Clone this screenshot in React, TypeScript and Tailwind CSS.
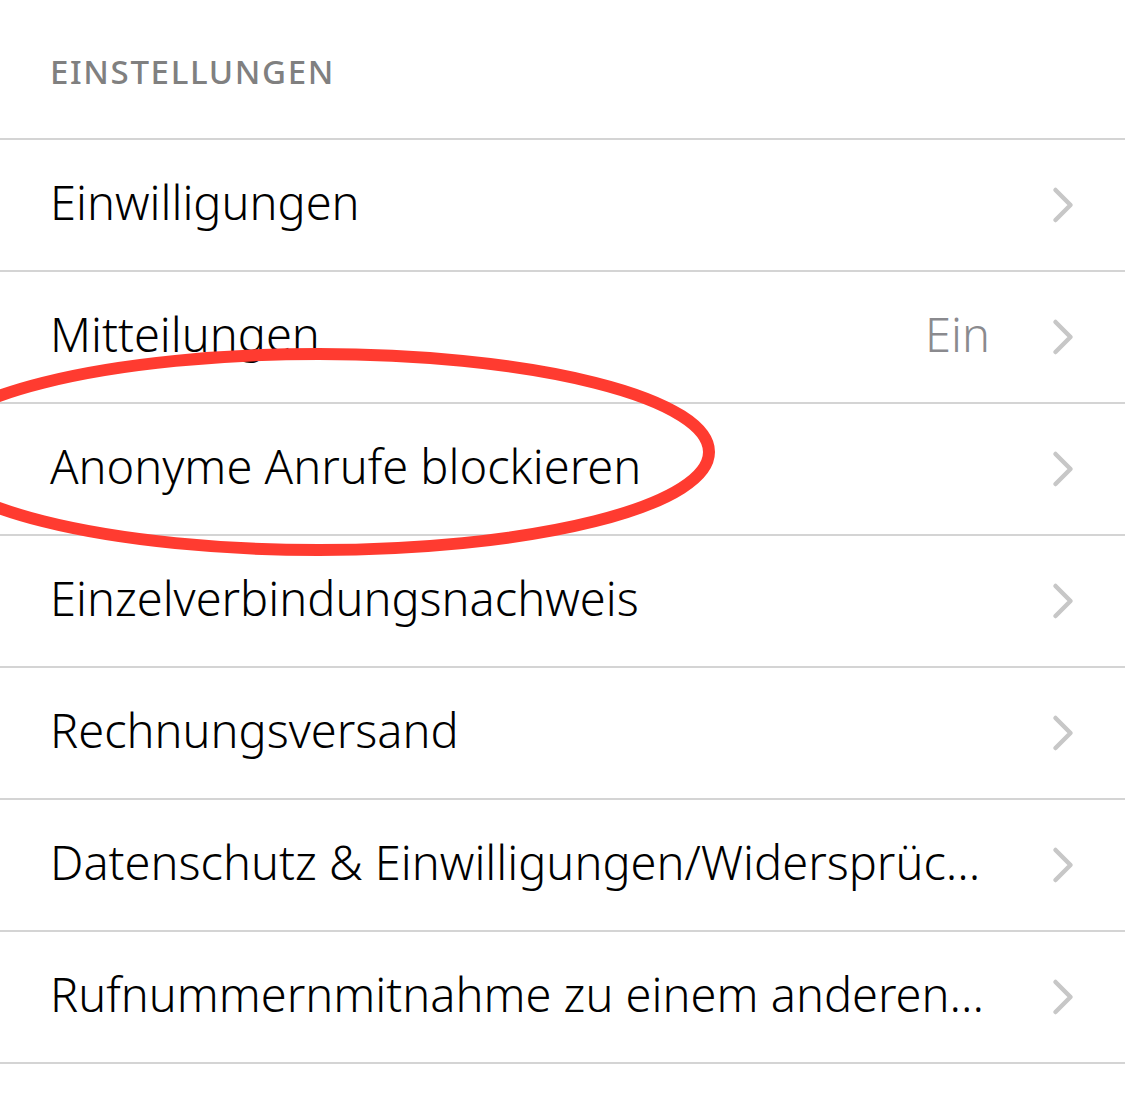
type Row = { label: string; value?: string };

const rows: Row[] = [
    { label: 'Einwilligungen' },
    { label: 'Mitteilungen', value: 'Ein' },
    { label: 'Anonyme Anrufe blockieren' },
    { label: 'Einzelverbindungsnachweis' },
    { label: 'Rechnungsversand' },
    { label: 'Datenschutz & Einwilligungen/Widersprüc...' },
    { label: 'Rufnummernmitnahme zu einem anderen...' },
];

function Chevron() {
    return (
        <svg width="26" height="40" viewBox="0 0 26 40" className="shrink-0">
            <polyline points="5.5,5 20.5,20 5.5,35" fill="none" stroke="#c7c7c7" strokeWidth="4.5" strokeLinecap="round" strokeLinejoin="round" />
        </svg>
    );
}

function SettingsRow({ label, value }: Row) {
    return (
        <div className="flex h-[132px] items-center border-b-2 border-[#d4d4d4] pl-[50px] pr-[49px]">
            <span className="flex-1 whitespace-nowrap pb-[5px] text-[47px] font-light text-black">{label}</span>
            {value && <span className="mr-[60px] pb-[5px] text-[47px] font-light text-[#8a8a8e]">{value}</span>}
            <Chevron />
        </div>
    );
}

export default function App() {
    return (
        <div className="relative h-[1095px] w-[1125px] overflow-hidden bg-white" style={{ fontFamily: '"Noto Sans", sans-serif' }}>
            <div className="flex h-[140px] items-center border-b-2 border-[#d4d4d4] pl-[50px] pt-[6px]">
                <span className="text-[33px] font-medium tracking-[0.05em] text-[#808080]">EINSTELLUNGEN</span>
            </div>
            {rows.map((r) => (
                <SettingsRow key={r.label} {...r} />
            ))}

            {/* hand-drawn highlight */}
            <svg className="pointer-events-none absolute left-0 top-0" width="1125" height="1095">
                <ellipse cx="319" cy="452" rx="390" ry="98" fill="none" stroke="#ff3b30" strokeWidth="12" />
            </svg>
        </div>
    );
}
